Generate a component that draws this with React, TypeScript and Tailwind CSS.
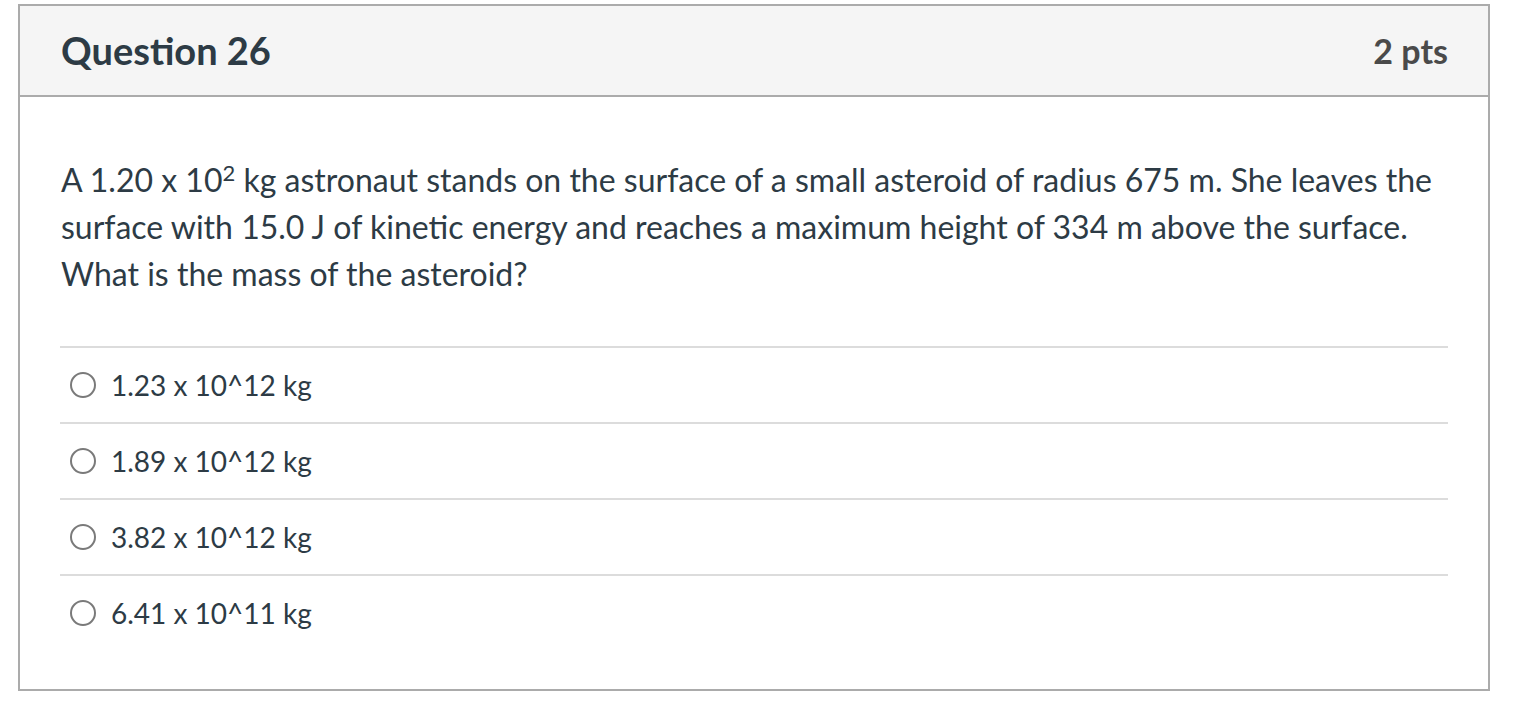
const answers = ["1.23 x 10^12 kg", "1.89 x 10^12 kg", "3.82 x 10^12 kg", "6.41 x 10^11 kg"];

function Radio() {
  return <span className="block h-[26px] w-[26px] shrink-0 rounded-full border-2 border-[#7a7a7a] bg-white" />;
}

export default function App() {
  return (
    <div className="min-h-[722px] bg-white pl-[18px] pt-[4px] font-['Lato','Noto_Sans',sans-serif] text-[#2d3b45]">
      <div className="w-[1472px] border-2 border-[#ababab]">
        <div className="flex h-[91px] items-center justify-between border-b-2 border-[#ababab] bg-[#f5f5f5] pl-[41px] pr-[40px]">
          <h2 className="text-[38px] font-bold">Question 26</h2>
          <span className="text-[34px] font-bold text-[#4a4a4a]">2 pts</span>
        </div>
        <div className="px-[41px] pt-[59px] text-[32px] leading-[47px]">
          <p>
            A 1.20 x 10<sup className="text-[22px] leading-none">2</sup> kg astronaut stands on the surface of a small asteroid of radius 675 m. She leaves the surface with 15.0 J of kinetic energy and reaches a maximum height of 334 m above the surface. What is the mass of the asteroid?
          </p>
        </div>
        <div className="mx-[40px] mt-[49px] mb-[39px]">
          {answers.map((a) => (
            <label key={a} className="flex h-[76px] items-center gap-[15px] border-t-2 border-[#dcdcdc] pl-[10px] text-[28px]">
              <Radio />
              <span>{a}</span>
            </label>
          ))}
        </div>
      </div>
    </div>
  );
}
